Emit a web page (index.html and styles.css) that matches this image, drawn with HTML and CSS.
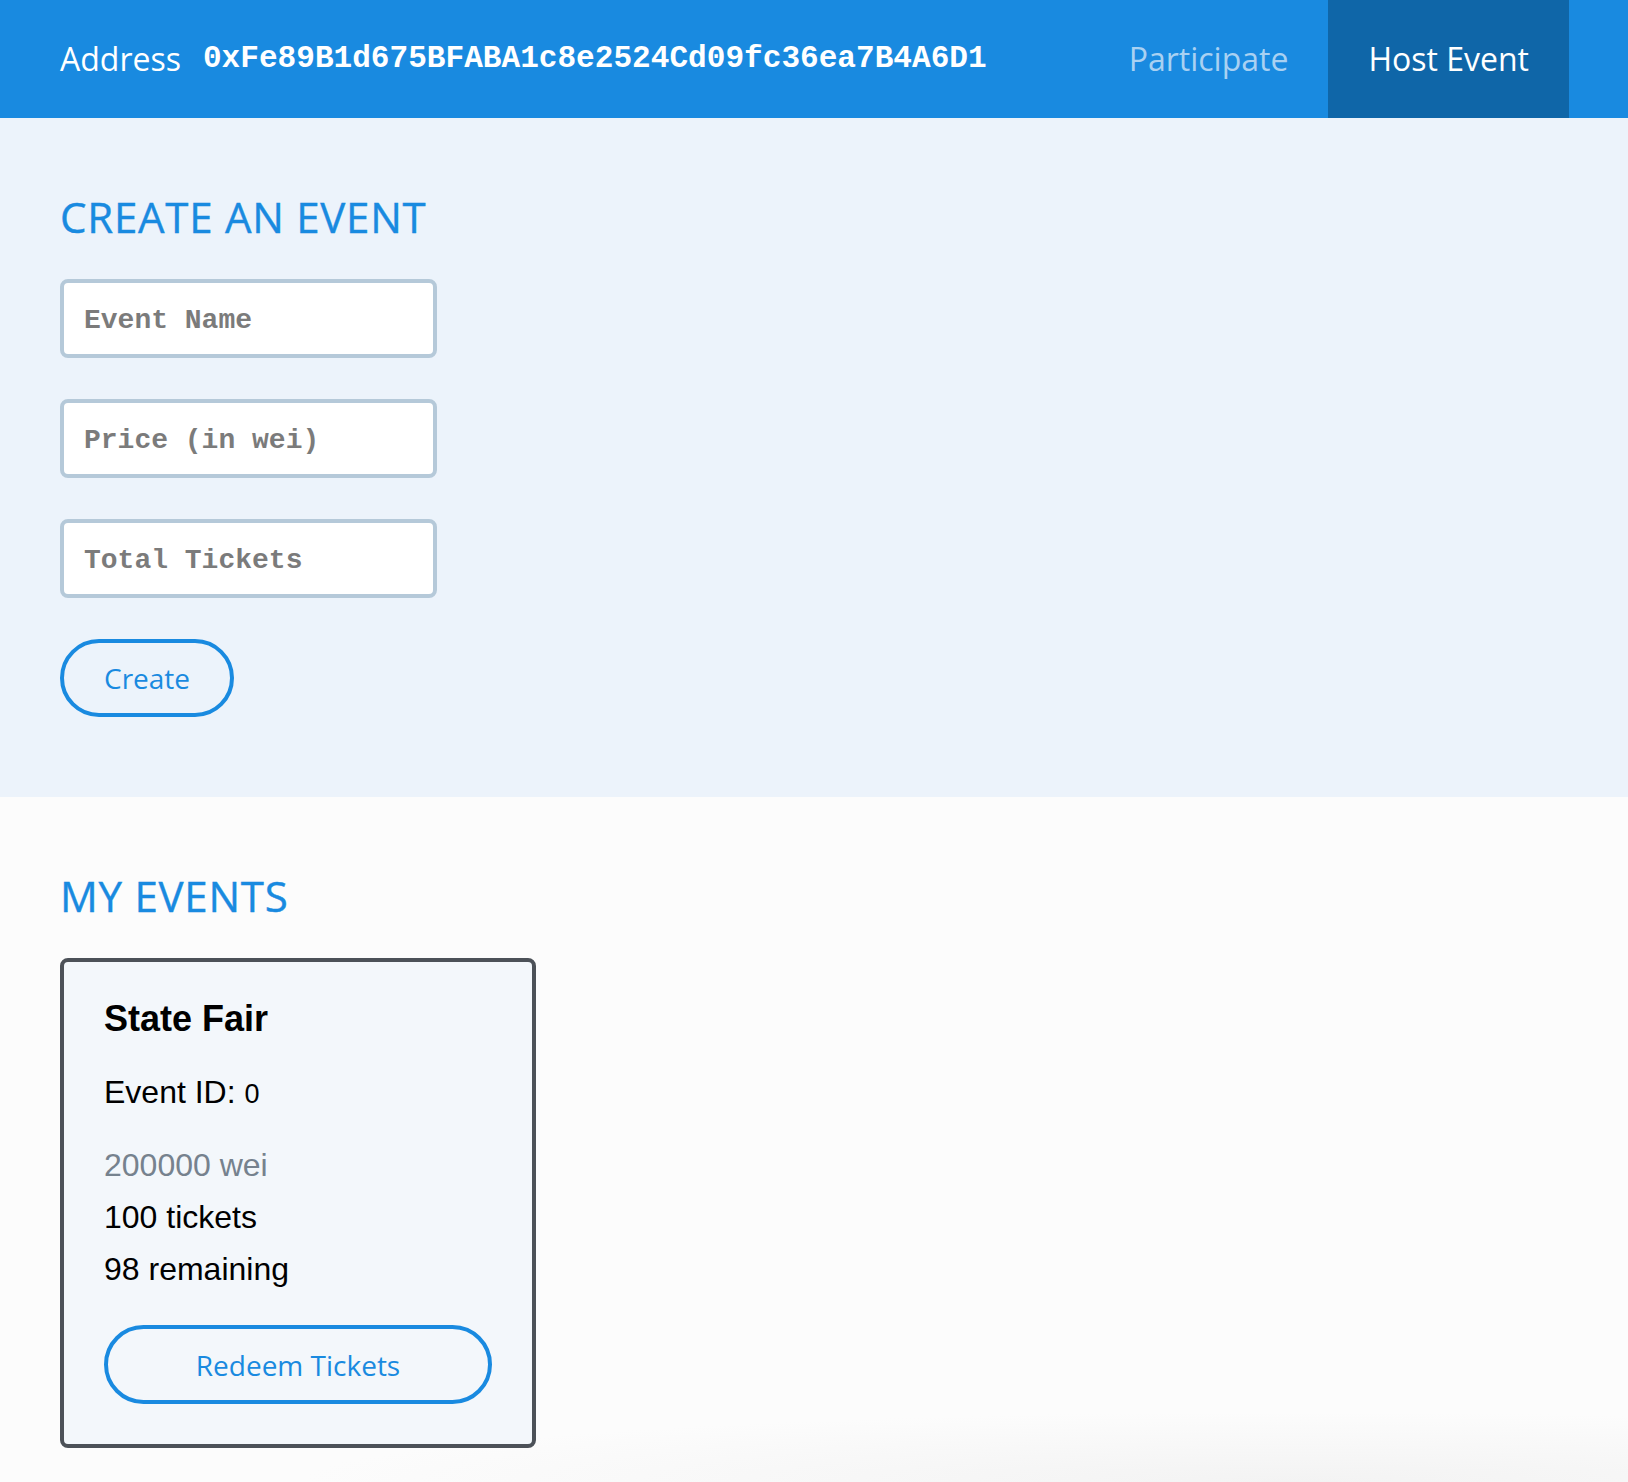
FILE: index.html
```html
<!DOCTYPE html>
<html lang="en">
<head>
<meta charset="utf-8">
<title>Host Event</title>
<link rel="stylesheet" href="styles.css">
</head>
<body>
<header class="topbar">
  <div class="account">
    <span class="account-label">Address</span>
    <span class="account-hash">0xFe89B1d675BFABA1c8e2524Cd09fc36ea7B4A6D1</span>
  </div>
  <nav class="nav">
    <a class="nav-link" href="#">Participate</a>
    <a class="nav-link nav-link-active" href="#">Host Event</a>
  </nav>
</header>

<main class="page">
  <section class="panel panel-create">
    <h2 class="section-title">CREATE AN EVENT</h2>
    <form class="create-form">
      <input class="field" type="text" placeholder="Event Name">
      <input class="field" type="text" placeholder="Price (in wei)">
      <input class="field" type="text" placeholder="Total Tickets">
      <button class="pill-button" type="button">Create</button>
    </form>
  </section>

  <section class="panel panel-events">
    <h2 class="section-title">MY EVENTS</h2>
    <div class="event-card">
      <h3 class="event-name">State Fair</h3>
      <p class="event-id">Event ID: <span class="event-id-value">0</span></p>
      <p class="event-line event-price">200000 wei</p>
      <p class="event-line">100 tickets</p>
      <p class="event-line">98 remaining</p>
      <button class="pill-button pill-button-wide" type="button">Redeem Tickets</button>
    </div>
  </section>
</main>
</body>
</html>
```
FILE: styles.css
```css
html, body {
  margin: 0;
  padding: 0;
}

body {
  min-height: 100vh;
  display: flex;
  flex-direction: column;
  background: #fcfcfc;
  font-family: "Open Sans", "Liberation Sans", sans-serif;
}

.topbar {
  height: 118px;
  flex: 0 0 auto;
  display: flex;
  justify-content: space-between;
  align-items: stretch;
  padding: 0 59px 0 60px;
  background: #198ae0;
  color: #ffffff;
}

.account {
  display: flex;
  align-items: center;
  gap: 22px;
}

.account-label {
  font-family: "Open Sans", sans-serif;
  font-size: 32px;
  line-height: 44px;
}

.account-hash {
  font-family: "Liberation Mono", "Courier New", monospace;
  font-weight: bold;
  font-size: 31.1px;
  line-height: 40px;
}

.nav {
  display: flex;
  align-items: stretch;
}

.nav-link {
  display: flex;
  align-items: center;
  padding: 0 40px 2px;
  font-size: 32px;
  color: #a9d1f2;
  text-decoration: none;
}

.nav-link-active {
  background: #0f66a8;
  color: #ffffff;
}

.page {
  flex: 1 0 auto;
  display: flex;
  flex-direction: column;
}

.panel {
  padding: 70px 60px 0;
}

.panel-create {
  background: #ecf3fb;
  padding-bottom: 80px;
}

.panel-events {
  flex: 1 0 auto;
  padding-bottom: 34px;
  background:
    radial-gradient(ellipse 1000px 70px at 1300px 100%, #f3f3f3 0%, rgba(252,252,252,0) 100%),
    #fcfcfc;
}

.section-title {
  margin: 0 0 34px;
  font-family: "Open Sans", sans-serif;
  font-weight: 400;
  font-size: 42px;
  line-height: 57px;
  letter-spacing: 0.75px;
  color: #198ae0;
  -webkit-text-stroke: 0.4px #198ae0;
}

.create-form {
  display: flex;
  flex-direction: column;
  align-items: flex-start;
}

.field {
  box-sizing: border-box;
  width: 377px;
  height: 79px;
  margin: 0 0 41px;
  padding: 4px 20px 0;
  border: 4px solid #b5c9d9;
  border-radius: 8px;
  background: #ffffff;
  font-family: "Liberation Mono", "Courier New", monospace;
  font-weight: bold;
  font-size: 28px;
  color: #333333;
  outline: none;
}

.field::placeholder {
  color: #7b7b7b;
  opacity: 1;
}

.pill-button {
  box-sizing: border-box;
  height: 78px;
  padding: 0 40px;
  border: 4px solid #198ae0;
  border-radius: 40px;
  background: transparent;
  font-family: "Open Sans", sans-serif;
  font-size: 28px;
  line-height: 38px;
  color: #198ae0;
  cursor: pointer;
}

.event-card {
  box-sizing: border-box;
  width: 476px;
  padding: 31px 40px 40px;
  border: 4px solid #4c5158;
  border-radius: 8px;
  background: #f3f7fb;
  font-family: "Liberation Sans", Arial, sans-serif;
  color: #000000;
}

.event-name {
  margin: 0 0 21px;
  font-size: 36px;
  font-weight: bold;
  line-height: 52px;
}

.event-id {
  margin: 0 0 19px;
  font-size: 32px;
  line-height: 52px;
}

.event-id-value {
  font-size: 27px;
}

.event-line {
  margin: 0;
  font-size: 32px;
  line-height: 52px;
}

.event-price {
  color: #76828e;
}

.pill-button-wide {
  display: block;
  width: 100%;
  height: 79px;
  margin-top: 30px;
}
```
